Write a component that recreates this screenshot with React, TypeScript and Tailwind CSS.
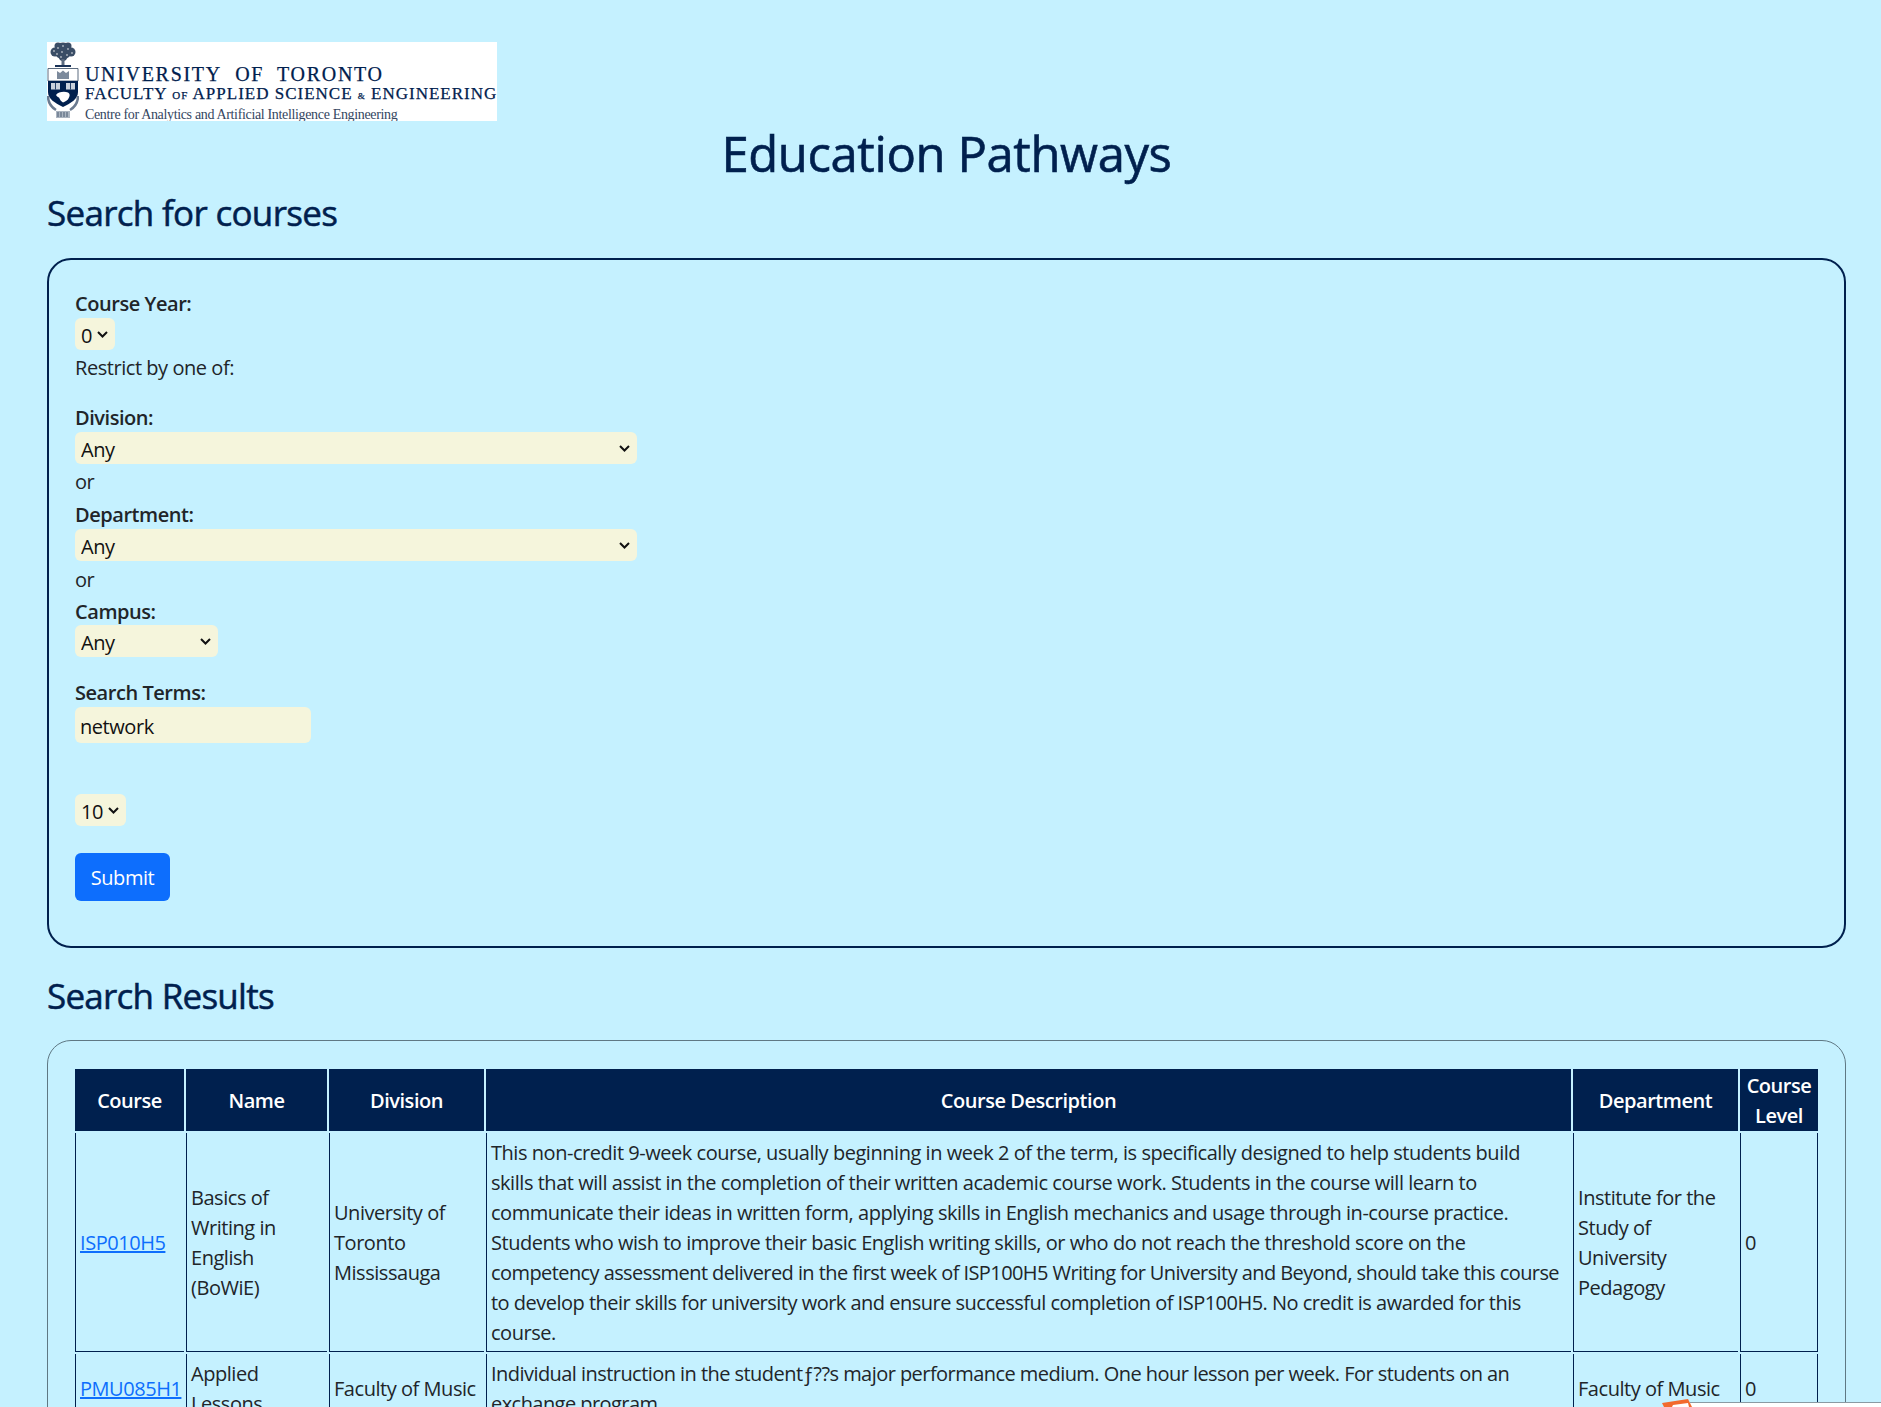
const bodyFont = "font-['Open_Sans','Noto_Sans',sans-serif]";

function Crest() {
  return (
    <svg viewBox="0 0 32 79" className="w-[32px] h-[79px] shrink-0">
      {/* tree */}
      <g fill="#3a4d66">
        <circle cx="16" cy="9" r="8.500" />
        <circle cx="8" cy="10" r="4.500" />
        <circle cx="24" cy="10" r="4.500" />
        <circle cx="11" cy="4" r="3.500" />
        <circle cx="21" cy="4" r="3.500" />
        <circle cx="16" cy="15" r="4" />
      </g>
      <g fill="#ffffff" opacity="0.6">
        <circle cx="7" cy="9" r="0.900" />
        <circle cx="11" cy="6" r="0.900" />
        <circle cx="16" cy="4" r="0.900" />
        <circle cx="21" cy="7" r="0.900" />
        <circle cx="25" cy="11" r="0.900" />
        <circle cx="10" cy="12" r="0.900" />
        <circle cx="15" cy="10" r="0.900" />
        <circle cx="20" cy="13" r="0.900" />
        <circle cx="14" cy="15" r="0.900" />
      </g>
      <path d="M14.500 17h3v6h-3z" fill="#5a6b80" />
      <path d="M8 23h16v2H8z" fill="#1a3358" />
      {/* shield */}
      <path d="M1 26.500h30v12.500H1z" fill="#ffffff" stroke="#33475f" strokeWidth="0.800" />
      <path d="M10 29l3 2 3-2.500 3 2.500 3-2v8H10z" fill="#7c8a9c" />
      <path d="M1 39h30v11c0 7-7 11-15 15C8 61 1 57 1 50z" fill="#00204e" />
      <path d="M4 41h9v6.500H4zM19 41h9v6.500h-9z" fill="#c9d1dc" />
      <path d="M8.500 41v6.500M23.500 41v6.500" stroke="#00204e" strokeWidth="0.800" />
      <path d="M9 53c2-3 8-4 12-2.500 2 1 2 3 1 5-1 3-4 4-6 5-2-1-3-3-4-5-1 0-2-1-3-2.500z" fill="#ffffff" />
      {/* laurels */}
      <path d="M1 54c0 7 3 11 8 14M31 54c0 7-3 11-8 14" fill="none" stroke="#6b7b90" strokeWidth="2.500" />
      {/* ribbon */}
      <path d="M9 69h14v7H9z" fill="#aab4c0" />
      <path d="M11 70v5M14 70v5M17 70v5M20 70v5" stroke="#33475f" strokeWidth="0.800" />
    </svg>
  );
}

function Logo() {
  return (
    <div className="flex w-[450px] h-[79px] bg-white overflow-hidden">
      <Crest />
      <div className="flex flex-col pl-[6px] pt-[22px] text-[#00204e] whitespace-nowrap font-['Liberation_Serif',serif] [-webkit-text-stroke:0.25px]">
        <div className="text-[20px] leading-[20px] tracking-[1.68px]">UNIVERSITY&nbsp; OF&nbsp; TORONTO</div>
        <div className="text-[17px] leading-[19px] tracking-[1px]">
          FACULTY <span className="text-[11px]">OF</span> APPLIED SCIENCE <span className="text-[9px]">&amp;</span> ENGINEERING
        </div>
        <div className="text-[14px] leading-[17px] tracking-[-0.34px] text-[#34465f] [-webkit-text-stroke:0]">Centre for Analytics and Artificial Intelligence Engineering</div>
      </div>
    </div>
  );
}

function Select({ value, width, className }: { value: string; width: string; className: string }) {
  return (
    <div className={`relative ${width} ${className}`}>
      <select className="block w-full h-[32px] appearance-none bg-[#f5f5dc] text-[#111] rounded-md border-none pl-[6px] pt-[3px] outline-none">
        <option>{value}</option>
      </select>
      <svg viewBox="0 0 11 7" className="absolute right-[7px] top-[13px] w-[11px] h-[7px] pointer-events-none">
        <path d="M1 1l4.500 4.500L10 1" fill="none" stroke="#111" strokeWidth="2" />
      </svg>
    </div>
  );
}

function App() {
  return (
    <div className={`h-screen overflow-hidden relative bg-[#c5f1ff] pl-[47px] pr-[35px] pt-[42px] text-[#212529] text-[20px] leading-[30px] tracking-[-0.45px] ${bodyFont}`}>
      <Logo />
      <h1 className="text-center text-[#00204e] text-[49px] leading-[58px] font-normal mt-[3px] tracking-[-0.4px] [-webkit-text-stroke:0.6px]">Education Pathways</h1>
      <h2 className="text-[#00204e] text-[35px] leading-[42px] font-normal mt-[10px] tracking-[-0.7px] [-webkit-text-stroke:0.5px]">Search for courses</h2>

      <form className="mt-[24px] border-2 border-[#00204e] rounded-[24px] h-[690px] px-[26px] pt-[29px] flex flex-col items-start">
        <label className="font-semibold">Course Year:</label>
        <Select value="0" width="w-[40px]" className="-mt-[1px]" />
        <p className="mt-[3px]">Restrict by one of:</p>
        <label className="font-semibold mt-[20px]">Division:</label>
        <Select value="Any" width="w-[562px]" className="-mt-[1px]" />
        <p className="mt-[3px]">or</p>
        <label className="font-semibold mt-[3px]">Department:</label>
        <Select value="Any" width="w-[562px]" className="-mt-[1px]" />
        <p className="mt-[4px]">or</p>
        <label className="font-semibold mt-[2px]">Campus:</label>
        <Select value="Any" width="w-[143px]" className="-mt-[2px]" />
        <label className="font-semibold mt-[21px]">Search Terms:</label>
        <input
          defaultValue="network"
          className="bg-[#f5f5dc] text-[#111] rounded-md h-[36px] w-[236px] px-[5px] pt-[2px] -mt-[1px] outline-none"
        />
        <Select value="10" width="w-[51px]" className="mt-[51px]" />
        <button type="button" className="mt-[27px] bg-[#0d6efd] text-white rounded-md w-[95px] h-[48px] pt-[2px]">
          Submit
        </button>
      </form>

      <h2 className="text-[#00204e] text-[35px] leading-[42px] font-normal mt-[27px] tracking-[-0.75px] [-webkit-text-stroke:0.5px]">Search Results</h2>

      <div className="mt-[23px] border border-[#5f7884] rounded-[24px] px-[25px] pt-[26px] h-[600px]">
        <table className="w-full table-fixed border-separate border-spacing-[2px] tracking-[-0.46px]">
          <thead>
            <tr className="bg-[#00204e] text-white text-center [&_th]:font-semibold [&_th]:px-0 [&_th]:pt-[2px] [&_th]:pb-0">
              <th className="w-[109px] h-[62px]">Course</th>
              <th className="w-[141px]">Name</th>
              <th className="w-[155px]">Division</th>
              <th className="w-[1085px]">Course Description</th>
              <th className="w-[165px]">Department</th>
              <th className="w-[78px]">Course Level</th>
            </tr>
          </thead>
          <tbody className="[&_td]:border-l [&_td]:border-b [&_td]:border-[#00204e] [&_td]:pl-[4px] [&_td]:pr-[3px] [&_td]:pt-[5px] [&_td]:pb-[3px] [&_td:last-child]:border-r">
            <tr>
              <td>
                <a href="#" className="text-[#0d6efd] underline">ISP010H5</a>
              </td>
              <td>Basics of Writing in English (BoWiE)</td>
              <td>University of Toronto Mississauga</td>
              <td>
                This non-credit 9-week course, usually beginning in week 2 of the term, is specifically designed to help students build<br />
                skills that will assist in the completion of their written academic course work. Students in the course will learn to<br />
                communicate their ideas in written form, applying skills in English mechanics and usage through in-course practice.<br />
                Students who wish to improve their basic English writing skills, or who do not reach the threshold score on the<br />
                <span className="tracking-[-0.58px]">competency assessment delivered in the first week of ISP100H5 Writing for University and Beyond, should take this course</span><br />
                <span className="tracking-[-0.51px]">to develop their skills for university work and ensure successful completion of ISP100H5. No credit is awarded for this</span><br />
                course.
              </td>
              <td>Institute for the Study of University Pedagogy</td>
              <td>0</td>
            </tr>
            <tr>
              <td>
                <a href="#" className="text-[#0d6efd] underline">PMU085H1</a>
              </td>
              <td>Applied Lessons</td>
              <td>Faculty of Music</td>
              <td className="tracking-[-0.55px]">
                Individual instruction in the student{"\u0192"}??s major performance medium. One hour lesson per week. For students on an exchange program.
              </td>
              <td>Faculty of Music</td>
              <td>0</td>
            </tr>
          </tbody>
        </table>
      </div>

      {/* widget peeking in at the bottom edge */}
      <div className="absolute right-0 bottom-0 w-[191px] h-[5px] bg-white border-t border-[#8a9aa3]" />
      <svg viewBox="0 0 30 8" className="absolute left-[1662px] top-[1399px] w-[30px] h-[8px]">
        <path d="M0 4L26 0l4 8H2z" fill="#f26a2e" />
        <path d="M10 8l1-2 15-2 1 4z" fill="#ffffff" />
      </svg>
    </div>
  );
}

export default App;
